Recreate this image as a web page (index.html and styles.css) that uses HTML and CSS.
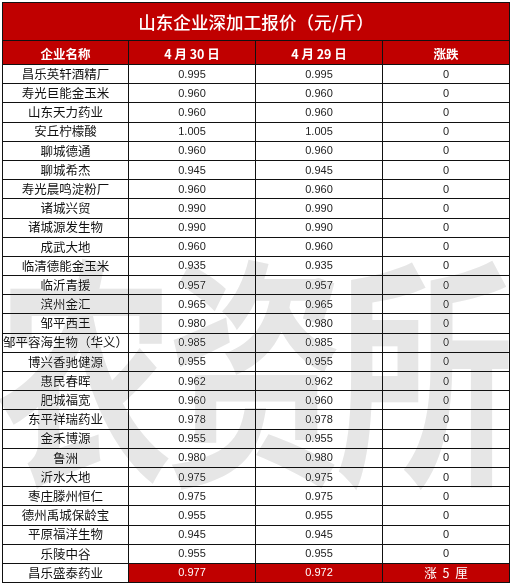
FILE: index.html
```html
<!DOCTYPE html>
<html lang="zh">
<head>
<meta charset="utf-8">
<link rel="stylesheet" href="styles.css">
</head>
<body>
<div class="page">
  <div class="sheet">
    <div class="title">山东企业深加工报价（元/斤）</div>
    <div class="th">企业名称</div>
    <div class="th">4 月 30 日</div>
    <div class="th">4 月 29 日</div>
    <div class="th">涨跌</div>

    <div class="name">昌乐英轩酒精厂</div><div class="num">0.995</div><div class="num">0.995</div><div class="num">0</div>
    <div class="name">寿光巨能金玉米</div><div class="num">0.960</div><div class="num">0.960</div><div class="num">0</div>
    <div class="name">山东天力药业</div><div class="num">0.960</div><div class="num">0.960</div><div class="num">0</div>
    <div class="name">安丘柠檬酸</div><div class="num">1.005</div><div class="num">1.005</div><div class="num">0</div>
    <div class="name">聊城德通</div><div class="num">0.960</div><div class="num">0.960</div><div class="num">0</div>
    <div class="name">聊城希杰</div><div class="num">0.945</div><div class="num">0.945</div><div class="num">0</div>
    <div class="name">寿光晨鸣淀粉厂</div><div class="num">0.960</div><div class="num">0.960</div><div class="num">0</div>
    <div class="name">诸城兴贸</div><div class="num">0.990</div><div class="num">0.990</div><div class="num">0</div>
    <div class="name">诸城源发生物</div><div class="num">0.990</div><div class="num">0.990</div><div class="num">0</div>
    <div class="name">成武大地</div><div class="num">0.960</div><div class="num">0.960</div><div class="num">0</div>
    <div class="name">临清德能金玉米</div><div class="num">0.935</div><div class="num">0.935</div><div class="num">0</div>
    <div class="name">临沂青援</div><div class="num">0.957</div><div class="num">0.957</div><div class="num">0</div>
    <div class="name">滨州金汇</div><div class="num">0.965</div><div class="num">0.965</div><div class="num">0</div>
    <div class="name">邹平西王</div><div class="num">0.980</div><div class="num">0.980</div><div class="num">0</div>
    <div class="name">邹平容海生物（华义）</div><div class="num">0.985</div><div class="num">0.985</div><div class="num">0</div>
    <div class="name">博兴香驰健源</div><div class="num">0.955</div><div class="num">0.955</div><div class="num">0</div>
    <div class="name">惠民春晖</div><div class="num">0.962</div><div class="num">0.962</div><div class="num">0</div>
    <div class="name">肥城福宽</div><div class="num">0.960</div><div class="num">0.960</div><div class="num">0</div>
    <div class="name">东平祥瑞药业</div><div class="num">0.978</div><div class="num">0.978</div><div class="num">0</div>
    <div class="name">金禾博源</div><div class="num">0.955</div><div class="num">0.955</div><div class="num">0</div>
    <div class="name">鲁洲</div><div class="num">0.980</div><div class="num">0.980</div><div class="num">0</div>
    <div class="name">沂水大地</div><div class="num">0.975</div><div class="num">0.975</div><div class="num">0</div>
    <div class="name">枣庄滕州恒仁</div><div class="num">0.975</div><div class="num">0.975</div><div class="num">0</div>
    <div class="name">德州禹城保龄宝</div><div class="num">0.955</div><div class="num">0.955</div><div class="num">0</div>
    <div class="name">平原福洋生物</div><div class="num">0.945</div><div class="num">0.945</div><div class="num">0</div>
    <div class="name">乐陵中谷</div><div class="num">0.955</div><div class="num">0.955</div><div class="num">0</div>
    <div class="name">昌乐盛泰药业</div><div class="num hl">0.977</div><div class="num hl">0.972</div><div class="num hl cjk">涨 5 厘</div>
  </div>
  <div class="watermark">农资所</div>
</div>
</body>
</html>
```

FILE: styles.css
```css
html, body {
  margin: 0;
  padding: 0;
  background: #ffffff;
}

.page {
  position: relative;
  width: 512px;
  height: 586px;
  padding: 2px 0 0 2px;
  box-sizing: border-box;
  overflow: hidden;
}

.sheet {
  display: grid;
  grid-template-columns: 125px 126px 126px 126px;
  grid-template-rows: 37px 23px repeat(27, 18.2px);
  gap: 1px;
  padding: 1px;
  width: max-content;
  background: #111111;
  font-family: "Noto Sans CJK SC", sans-serif;
}

.sheet > div {
  display: flex;
  align-items: center;
  justify-content: center;
  background: #ffffff;
  white-space: nowrap;
  overflow: hidden;
}

.title {
  grid-column: 1 / span 4;
  background: #c00000 !important;
  color: #ffffff;
  font-size: 17.5px;
  font-weight: 500;
  letter-spacing: 0.1px;
}

.th {
  background: #c00000 !important;
  color: #ffffff;
  font-size: 12.5px;
  font-weight: 700;
  padding-top: 1px;
}

.name {
  color: #111111;
  font-size: 12.5px;
  line-height: 1;
}

.num {
  color: #222222;
  font-family: "Liberation Sans", Arial, sans-serif;
  font-size: 11px;
  line-height: 1;
}

.num.hl {
  background: #c00000 !important;
  color: #ffffff;
}

.num.cjk {
  font-family: "Noto Sans CJK SC", sans-serif;
  font-size: 12.5px;
  word-spacing: 3px;
}

.watermark {
  position: absolute;
  left: -4px;
  top: 238px;
  font-family: "Noto Sans CJK SC", sans-serif;
  font-weight: 700;
  font-size: 178px;
  line-height: 1;
  letter-spacing: -8px;
  color: #e6e6e6;
  mix-blend-mode: darken;
  transform: scaleY(1.38);
  transform-origin: top left;
  pointer-events: none;
  white-space: nowrap;
}
```
